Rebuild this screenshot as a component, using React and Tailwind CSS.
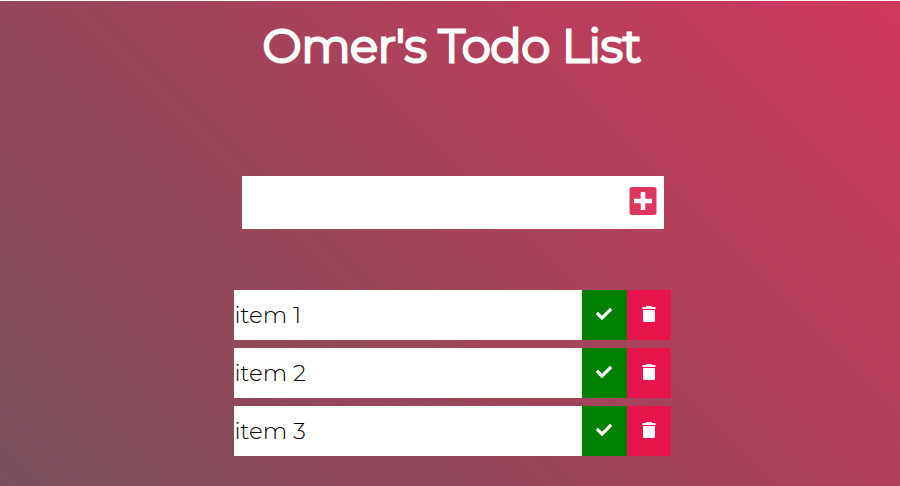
import { FaCheck } from "react-icons/fa";

const items = ["item 1", "item 2", "item 3"];

function PlusIcon() {
  return (
    <svg width="28" height="28" viewBox="0 0 28 28" aria-hidden="true">
      <rect width="27" height="28" x="0.5" rx="2.5" fill="currentColor" />
      <path d="M14 5v18M5 14h18" stroke="white" strokeWidth="4.6" />
    </svg>
  );
}

function TrashIcon() {
  return (
    <svg width="14" height="16" viewBox="0 0 14 16" fill="currentColor" aria-hidden="true">
      <path d="M0.5 1h3.3l0.8-1h4.8l0.8 1h3.3v2h-13zM1 4h12v10.5a1.5 1.5 0 0 1-1.5 1.5h-9a1.5 1.5 0 0 1-1.5-1.5z" />
    </svg>
  );
}

export default function App() {
  return (
    <div className="min-h-screen bg-linear-[45deg,#774f5a,#cf385d] font-['Montserrat','Inter',sans-serif]">
      <header className="flex h-[90px] items-center justify-center border-t border-white pl-1">
        <h1 className="text-[46px] font-light text-white [-webkit-text-stroke:3px_white]">Omer's Todo List</h1>
      </header>
      <form className="flex justify-center pt-[86px] pl-1.5" onSubmit={(e) => e.preventDefault()}>
        <input aria-label="New todo" className="h-[53px] w-[380px] bg-white px-2 text-2xl outline-none" />
        <button type="submit" aria-label="Add todo" className="flex h-[53px] w-[42px] items-center justify-center bg-white pb-1 text-[#df365e]">
          <PlusIcon />
        </button>
      </form>
      <ul className="flex flex-col items-center gap-2 pt-[61px] pb-[30px] pl-1">
        {items.map((item) => (
          <li key={item} className="flex h-[50px] w-[437px] bg-white">
            <span className="flex-1 self-center pl-px text-[23px] font-light">{item}</span>
            <button aria-label={"Complete " + item} className="flex w-[45px] items-center justify-center bg-[#008000] pb-0.5 text-white">
              <FaCheck size={16} />
            </button>
            <button aria-label={"Delete " + item} className="flex w-11 items-center justify-center bg-[#e6144b] pb-0.5 text-white">
              <TrashIcon />
            </button>
          </li>
        ))}
      </ul>
    </div>
  );
}
